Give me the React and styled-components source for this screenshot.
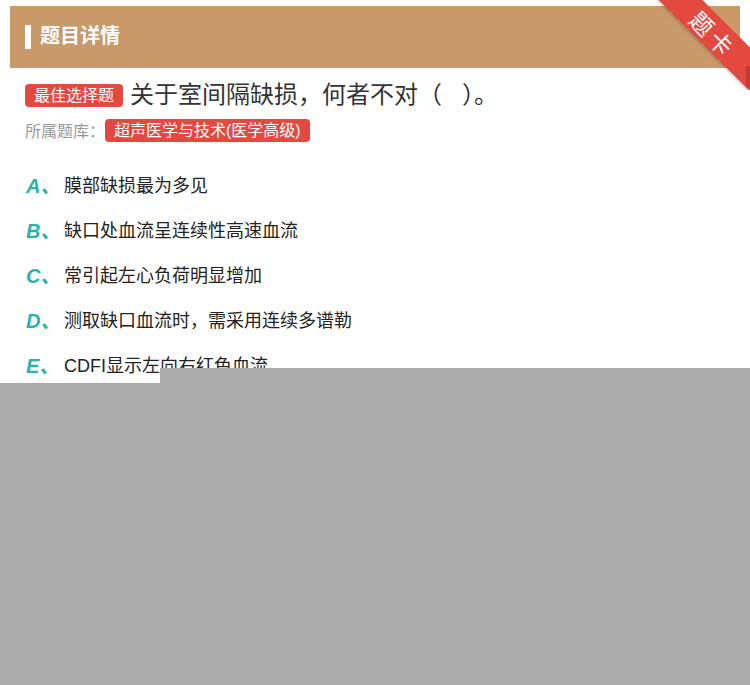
import styled, { createGlobalStyle } from "styled-components";

const Global = createGlobalStyle`
  html, body { margin: 0; padding: 0; background: #fff; }
  body { font-family: "Liberation Sans", Arial, "Noto Sans CJK SC", sans-serif; }
`;

const Page = styled.div`
  position: relative;
  width: 750px;
  height: 685px;
  overflow: hidden;
  padding-top: 6px;
  box-sizing: border-box;
`;

const Header = styled.div`
  margin: 0 10px;
  height: 62px;
  background: #c9996a;
  display: flex;
  align-items: center;
  padding-left: 15px;
  gap: 9px;
`;

const Bar = styled.span`
  width: 6px;
  height: 24px;
  background: #fff;
`;

const HeaderTitle = styled.h1`
  margin: 0 0 6px;
  color: #fff;
  font-size: 20px;
  font-weight: bold;
`;

const Ribbon = styled.div`
  position: absolute;
  top: 0;
  right: 0;
  width: 96px;
  height: 90px;
  overflow: hidden;
`;

const RibbonBand = styled.div`
  position: absolute;
  top: 18px;
  right: -34px;
  width: 140px;
  height: 31px;
  background: #e4493f;
  transform: rotate(45deg);
  transform-origin: center;
  display: flex;
  align-items: center;
  justify-content: center;
  color: #fff;
  font-size: 23px;
  letter-spacing: 4px;
  border-radius: 5px;
  box-shadow: 0 2px 3px rgba(0, 0, 0, 0.15);
`;

const RibbonFold = styled.div`
  position: absolute;
  right: 0;
  top: 66px;
  width: 4px;
  height: 22px;
  background: #c23a31;
  border-radius: 0 0 0 4px;
`;

const Body = styled.div`
  padding: 12px 25px 0;
`;

const QuestionRow = styled.div`
  display: flex;
  align-items: center;
  gap: 7px;
`;

const Tag = styled.span`
  background: #e4493f;
  color: #fff;
  font-size: 16px;
  line-height: 23px;
  padding: 0 9px;
  border-radius: 4px;
`;

const QuestionText = styled.span`
  font-size: 24px;
  color: #333;
  line-height: 30px;
  white-space: pre;
`;

const BankRow = styled.div`
  display: flex;
  align-items: center;
  margin-top: 8px;
`;

const BankLabel = styled.span`
  color: #999;
  font-size: 16px;
`;

const Options = styled.ul`
  list-style: none;
  margin: 30px 0 0;
  padding: 0;
  display: flex;
  flex-direction: column;
  gap: 21px;
`;

const Option = styled.li`
  display: flex;
  align-items: center;
  height: 24px;
`;

const Letter = styled.span`
  width: 38px;
  margin-left: 1px;
  color: #26b5ad;
  font-size: 20px;
  font-weight: bold;
  font-style: italic;
`;

const OptionText = styled.span`
  font-size: 18px;
  color: #222;
`;

const Cover = styled.div`
  position: absolute;
  left: 0;
  right: 0;
  top: 383px;
  bottom: 0;
  background: #aaaaaa;
`;

const CoverTop = styled.div`
  position: absolute;
  left: 160px;
  right: 0;
  top: 368px;
  height: 15px;
  background: #aaaaaa;
`;

const options = [
  ["A", "膜部缺损最为多见"],
  ["B", "缺口处血流呈连续性高速血流"],
  ["C", "常引起左心负荷明显增加"],
  ["D", "测取缺口血流时，需采用连续多谱勒"],
  ["E", "CDFI显示左向右红色血流"],
];

export default function App() {
  return (
    <>
      <Global />
      <Page>
        <Header>
          <Bar />
          <HeaderTitle>题目详情</HeaderTitle>
        </Header>
        <Ribbon>
          <RibbonBand>题卡</RibbonBand>
          <RibbonFold />
        </Ribbon>
        <Body>
          <QuestionRow>
            <Tag>最佳选择题</Tag>
            <QuestionText>关于室间隔缺损，何者不对（   ）。</QuestionText>
          </QuestionRow>
          <BankRow>
            <BankLabel>所属题库：</BankLabel>
            <Tag>超声医学与技术(医学高级)</Tag>
          </BankRow>
          <Options>
            {options.map(([l, t]) => (
              <Option key={l}>
                <Letter>{l}、</Letter>
                <OptionText>{t}</OptionText>
              </Option>
            ))}
          </Options>
        </Body>
        <CoverTop />
        <Cover />
      </Page>
    </>
  );
}
